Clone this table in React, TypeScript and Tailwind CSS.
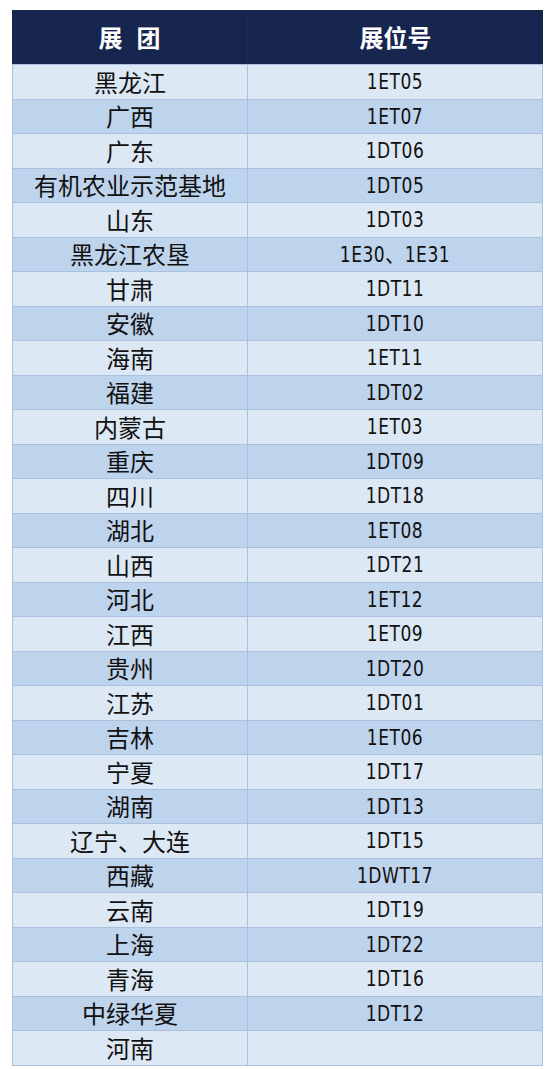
const rows: [string, string][] = [
  ["黑龙江", "1ET05"],
  ["广西", "1ET07"],
  ["广东", "1DT06"],
  ["有机农业示范基地", "1DT05"],
  ["山东", "1DT03"],
  ["黑龙江农垦", "1E30、1E31"],
  ["甘肃", "1DT11"],
  ["安徽", "1DT10"],
  ["海南", "1ET11"],
  ["福建", "1DT02"],
  ["内蒙古", "1ET03"],
  ["重庆", "1DT09"],
  ["四川", "1DT18"],
  ["湖北", "1ET08"],
  ["山西", "1DT21"],
  ["河北", "1ET12"],
  ["江西", "1ET09"],
  ["贵州", "1DT20"],
  ["江苏", "1DT01"],
  ["吉林", "1ET06"],
  ["宁夏", "1DT17"],
  ["湖南", "1DT13"],
  ["辽宁、大连", "1DT15"],
  ["西藏", "1DWT17"],
  ["云南", "1DT19"],
  ["上海", "1DT22"],
  ["青海", "1DT16"],
  ["中绿华夏", "1DT12"],
  ["河南", ""],
]

export default function App() {
  return (
    <div className="bg-white w-[545px] h-[1069px] pt-[10px] pl-[12px]">
      <div className="w-[531px] font-['Noto_Sans_CJK_SC',sans-serif] text-[#111]">
        <div className="grid grid-cols-[236px_1fr] h-[54px] bg-[#16264e] text-white font-bold text-[24px]">
          <div className="flex items-center justify-center gap-[14px] border-r border-[#1c2c55]">
            <span>展</span>
            <span>团</span>
          </div>
          <div className="flex items-center justify-center">展位号</div>
        </div>
        <div className="border-l border-r border-b border-[#a9c0de]">
          {rows.map(([name, booth], i) => (
            <div
              key={i}
              className={`grid grid-cols-[235px_1fr] h-[34.5px] border-t border-[#a9c0de] ${
                i % 2 === 0 ? "bg-[#dde8f5]" : "bg-[#bed3ec]"
              }`}
            >
              <div className="flex items-center justify-center border-r border-[#a9c0de] text-[24px] leading-none">
                {name}
              </div>
              <div className="flex items-center justify-center text-[19px] leading-none font-['DejaVu_Sans_Condensed','Noto_Sans_CJK_SC',sans-serif] tracking-[0.5px] scale-y-[1.15]">
                {booth}
              </div>
            </div>
          ))}
        </div>
      </div>
    </div>
  )
}
